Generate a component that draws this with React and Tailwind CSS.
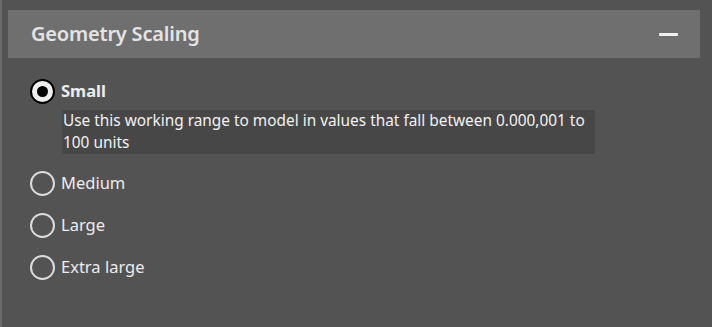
const options = [
  {
    id: 'small',
    label: 'Small',
    description: 'Use this working range to model in values that fall between 0.000,001 to 100 units',
  },
  { id: 'medium', label: 'Medium' },
  { id: 'large', label: 'Large' },
  { id: 'xlarge', label: 'Extra large' },
]

function Radio({ checked }) {
  if (checked) {
    return (
      <span className="flex items-center justify-center w-[25px] h-[25px] rounded-full bg-[#eeeeee] border-2 border-black shrink-0">
        <span className="w-[11px] h-[11px] rounded-full bg-black" />
      </span>
    )
  }
  return <span className="w-[25px] h-[25px] rounded-full border-2 border-[#dcdcdc] shrink-0" />
}

export default function App() {
  const selected = 'small'

  return (
    <div
      className="w-[712px] h-[327px] bg-[#535353] border-l-2 border-[#6b6b6b] pt-[10px] pl-[6px] pr-[12px]"
      style={{ fontFamily: '"Noto Sans", "Open Sans", sans-serif' }}
    >
      {/* Header */}
      <div className="flex items-center justify-between h-[48px] bg-[#6f6f6f] pl-[23px] pr-[22px]">
        <span className="text-[20px] font-semibold text-[#e4e4e4] tracking-[-0.2px]">Geometry Scaling</span>
        <span className="w-[19px] h-[3px] bg-[#f0f0f0] rounded-[1px]" />
      </div>

      {/* Options */}
      <div className="flex flex-col pl-[22px] pt-[20px]">
        {options.map((opt) => {
          const isOn = opt.id === selected
          return (
            <div key={opt.id} className="flex flex-col mb-[16px]">
              <div className="flex items-center gap-[6px] h-[26px]">
                <Radio checked={isOn} />
                <span className={`text-[16.5px] text-[#ececec] ${isOn ? 'font-bold' : ''}`}>{opt.label}</span>
              </div>
              {isOn && opt.description && (
                <div className="ml-[32px] mt-[6px] w-[533px] bg-[#474747] px-[1px] text-[15.4px] leading-[22px] text-[#f2f2f2]">
                  {opt.description}
                </div>
              )}
            </div>
          )
        })}
      </div>
    </div>
  )
}
